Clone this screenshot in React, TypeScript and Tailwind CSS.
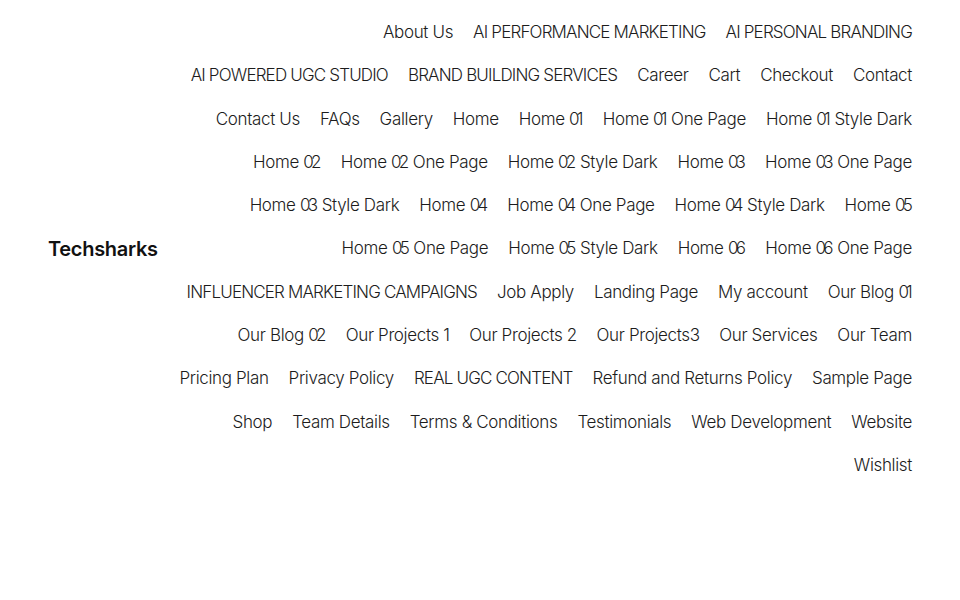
import React from "react";

const links = [
  "About Us",
  "AI PERFORMANCE MARKETING",
  "AI PERSONAL BRANDING",
  "AI POWERED UGC STUDIO",
  "BRAND BUILDING SERVICES",
  "Career",
  "Cart",
  "Checkout",
  "Contact",
  "Contact Us",
  "FAQs",
  "Gallery",
  "Home",
  "Home 01",
  "Home 01 One Page",
  "Home 01 Style Dark",
  "Home 02",
  "Home 02 One Page",
  "Home 02 Style Dark",
  "Home 03",
  "Home 03 One Page",
  "Home 03 Style Dark",
  "Home 04",
  "Home 04 One Page",
  "Home 04 Style Dark",
  "Home 05",
  "Home 05 One Page",
  "Home 05 Style Dark",
  "Home 06",
  "Home 06 One Page",
  "INFLUENCER MARKETING CAMPAIGNS",
  "Job Apply",
  "Landing Page",
  "My account",
  "Our Blog 01",
  "Our Blog 02",
  "Our Projects 1",
  "Our Projects 2",
  "Our Projects3",
  "Our Services",
  "Our Team",
  "Pricing Plan",
  "Privacy Policy",
  "REAL UGC CONTENT",
  "Refund and Returns Policy",
  "Sample Page",
  "Shop",
  "Team Details",
  "Terms & Conditions",
  "Testimonials",
  "Web Development",
  "Website",
  "Wishlist",
];

function Label({ text }: { text: string }) {
  const parts = text.split(/(\d)/).filter((p) => p.length > 0);
  return (
    <>
      {parts.map((p, i) =>
        p === "0" ? (
          <span key={i} className="tracking-[-2.8px]">
            {p}
          </span>
        ) : /^\d$/.test(p) ? (
          <span key={i} className="tracking-[-0.8px]">
            {p}
          </span>
        ) : (
          <span key={i}>{p}</span>
        )
      )}
    </>
  );
}

export default function App() {
  return (
    <div className="w-[960px] h-[600px] bg-white" style={{ fontFamily: "Inter, 'Liberation Sans', sans-serif" }}>
      <header className="flex items-center justify-between px-12 pt-[11px]">
        <div className="text-[20px] font-semibold tracking-[-0.3px] text-[#111]">Techsharks</div>
        <nav className="w-[742px] flex flex-wrap justify-end gap-x-5">
          {links.map((l) => {
            const upper = l === l.toUpperCase();
            return (
              <a
                key={l}
                href="#"
                className={
                  upper
                    ? "text-[17px] font-light leading-[43.3px] text-[#1c1c1c] tracking-[-0.83px] whitespace-nowrap"
                    : "text-[17px] font-light leading-[43.3px] text-[#1c1c1c] tracking-[-0.35px] whitespace-nowrap"
                }
              >
                <Label text={l} />
              </a>
            );
          })}
        </nav>
      </header>
    </div>
  );
}
